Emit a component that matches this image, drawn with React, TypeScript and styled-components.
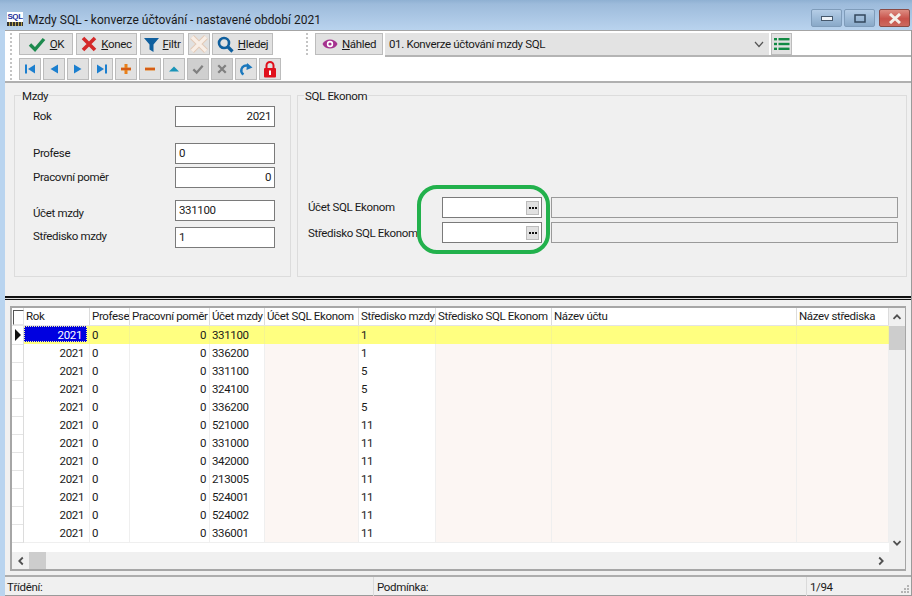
import React from 'react';
import styled, { createGlobalStyle } from 'styled-components';

const GlobalStyle = createGlobalStyle`
  html, body {
    margin: 0;
    padding: 0;
    background: #f0f0f0;
    overflow: hidden;
  }
  * {
    box-sizing: border-box;
  }
`;

const FONT = `Roboto, "Liberation Sans", Arial, sans-serif`;

const Window = styled.div`
  width: 912px;
  height: 596px;
  display: flex;
  flex-direction: column;
  background: #b9d4ef;
  font-family: ${FONT};
  font-size: 11.5px;
  letter-spacing: -0.35px;
  color: #1a1a1a;
  overflow: hidden;
`;

const TitleBar = styled.div`
  height: 30px;
  flex: none;
  display: flex;
  align-items: center;
  padding: 0 2px 0 7px;
  background: linear-gradient(#8fb0d2 0, #9dbbdb 4px, #b9d3ee 100%);
`;

const AppLogo = styled.div`
  width: 16px;
  height: 14px;
  margin: 8px 5px 0 0;
  background: #fff;
  display: flex;
  flex-direction: column;
  align-items: center;
  font: bold 8px/9px "Liberation Sans", Arial, sans-serif;
  letter-spacing: -0.4px;
  color: #1b2f9c;
  overflow: hidden;
`;

const LogoFoot = styled.span`
  width: 100%;
  height: 4px;
  margin-top: 1px;
  background: repeating-linear-gradient(90deg, #333 0 2px, #b8a24c 2px 3px);
`;

const TitleText = styled.div`
  flex: 1;
  padding-top: 9px;
  font-size: 12px;
  letter-spacing: 0;
`;

const CaptionButton = styled.div<{ $close?: boolean; $gap: number }>`
  width: 31px;
  height: 18px;
  margin: 6px 0 0 ${p => p.$gap}px;
  border-radius: 2px;
  border: 1px solid ${p => (p.$close ? '#8a4a44' : '#7f9cba')};
  background: ${p => (p.$close
    ? 'linear-gradient(#dd8d82, #c8524a 55%, #cc6a60)'
    : 'linear-gradient(#b5cde6, #9ebbd8 50%, #8aa9c8)')};
  display: flex;
  align-items: center;
  justify-content: center;
`;

const Content = styled.div`
  flex: 1;
  min-height: 0;
  margin-left: 5px;
  display: flex;
  flex-direction: column;
  background: #f0f0f0;
  border-right: 1px solid #9a9a9a;
`;

const Toolbars = styled.div`
  height: 53px;
  flex: none;
  background: #fff;
  border-top: 1px solid #a4a4a4;
  border-bottom: 2px solid #b0b0b0;
`;

const ToolRow = styled.div`
  height: 26px;
  display: flex;
  padding: 2px 0 0 14px;
`;

const ToolRowLow = styled(ToolRow)`
  height: 24px;
  padding-top: 1px;
`;

const Grip = styled.span<{ $after?: number; $before?: number }>`
  width: 2px;
  height: 22px;
  margin: 0 ${p => p.$after ?? 0}px 0 ${p => p.$before ?? -9}px;
  border-left: 2px dotted #c4c4c4;
  flex: none;
`;

const ToolButton = styled.button<{ $w: number; $gap?: number }>`
  width: ${p => p.$w}px;
  height: 22px;
  margin: 0 0 0 ${p => p.$gap ?? 0}px;
  padding: 0;
  flex: none;
  display: flex;
  align-items: center;
  justify-content: center;
  gap: 4px;
  border: 1px solid #bcbcbc;
  background: #e1e1e1;
  font: 11.5px ${FONT};
  letter-spacing: -0.35px;
  color: #1a1a1a;
`;

const MiniButton = styled(ToolButton)<{ $dim?: boolean }>`
  width: 22px;
  margin-left: 2px;
  background: ${p => (p.$dim ? '#cfcfcf' : '#e1e1e1')};
  &:first-of-type {
    margin-left: 0;
  }
`;

const ComboGroup = styled.div`
  flex: 1;
  height: 24px;
  margin-left: 2px;
  display: flex;
  border-bottom: 2px solid #b4b4b4;
`;

const Combo = styled.div`
  width: 384px;
  height: 22px;
  display: flex;
  align-items: center;
  justify-content: space-between;
  padding: 0 5px 0 4px;
  background: #e3e3e3;
`;

const FormArea = styled.div`
  height: 213px;
  flex: none;
  display: grid;
  grid-template-columns: 277px 610px;
  column-gap: 6px;
  padding: 4px 0 0 9px;
`;

const Group = styled.fieldset`
  position: relative;
  margin: 0;
  height: 190px;
  padding: 0;
  border: 1px solid #dcdcdc;
  min-width: 0;
`;

const GroupTitle = styled.legend`
  margin-left: 6px;
  padding: 2px 1px 0;
  line-height: 14px;
`;

const FieldColumn = styled.div<{ $top: number; $left: number }>`
  display: flex;
  flex-direction: column;
  padding: ${p => p.$top}px 0 0 ${p => p.$left}px;
`;

const FieldRow = styled.div<{ $gap?: number; $label?: number }>`
  display: grid;
  grid-template-columns: ${p => p.$label ?? 142}px auto 1fr;
  margin-top: ${p => p.$gap ?? 0}px;
  height: 21px;
`;

const FieldLabel = styled.label<{ $dy?: number }>`
  line-height: 21px;
  margin-top: ${p => p.$dy ?? 0}px;
  white-space: nowrap;
`;

const Input = styled.div<{ $right?: boolean }>`
  width: 100px;
  height: 21px;
  border: 1px solid #7a7a7a;
  background: #fff;
  line-height: 19px;
  padding: 0 3px;
  text-align: ${p => (p.$right ? 'right' : 'left')};
`;

const PickInput = styled(Input)`
  display: flex;
  justify-content: flex-end;
  align-items: center;
  padding: 0 2px 0 0;
`;

const PickButton = styled.span`
  width: 13px;
  height: 14px;
  background: #e1e1e1;
  border: 1px solid #bcbcbc;
  display: flex;
  align-items: center;
  justify-content: center;
  gap: 1px;
`;

const Dot = styled.i`
  width: 2px;
  height: 2px;
  background: #111;
`;

const ReadOnly = styled.div`
  width: 347px;
  height: 21px;
  margin-left: 9px;
  border: 1px solid #9a9a9a;
  background: #f0f0f0;
`;

const Highlight = styled.div`
  position: absolute;
  left: 119px;
  top: 82px;
  width: 133px;
  height: 69px;
  border: 4px solid #22b14c;
  border-radius: 20px;
  pointer-events: none;
`;

const Splitter = styled.div`
  height: 4px;
  flex: none;
  border-top: 2px solid #111;
  border-bottom: 1px solid #111;
  background: #dcdcdc;
`;

const GridArea = styled.div`
  flex: 1;
  min-height: 0;
  padding: 6px 5px 4px 5px;
  display: flex;
`;

const GridFrame = styled.div`
  width: 896px;
  height: 265px;
  border: 2px solid #a6a6a6;
  border-right-width: 1px;
  display: grid;
  grid-template-columns: 877px 16px;
  grid-template-rows: 244px 17px;
  background: #fff;
`;

const GridBody = styled.div`
  grid-column: 1;
  grid-row: 1;
  overflow: hidden;
`;

const COLUMNS = '12px 66px 40px 80px 55px 94px 77px 116px 245px 92px';

const HeaderRow = styled.div`
  display: grid;
  grid-template-columns: ${COLUMNS};
  height: 18px;
  border-bottom: 1px solid #e4e4e4;
`;

const HeaderCell = styled.div`
  padding-left: 2px;
  line-height: 17px;
  border-right: 1px solid #dcdcdc;
  white-space: nowrap;
  overflow: hidden;
`;

const CornerBox = styled.div`
  position: relative;
  border-right: 1px solid #dcdcdc;
  &::before {
    content: '';
    position: absolute;
    left: 1px;
    top: 2px;
    width: 9px;
    height: 13px;
    border: 1px solid #e4e4e4;
    border-top-color: #555;
    border-left-color: #555;
  }
`;

const DataRow = styled.div`
  display: grid;
  grid-template-columns: ${COLUMNS};
  height: 18px;
`;

const Cell = styled.div<{
  $right?: number;
  $tint?: boolean;
  $active?: boolean;
}>`
  padding: 0 ${p => p.$right ?? 0}px 0 ${p => (p.$right ? 0 : 2)}px;
  text-align: ${p => (p.$right ? 'right' : 'left')};
  line-height: 18px;
  border-right: 1px solid ${p => (p.$active ? '#f5f590' : '#efefef')};
  border-bottom: 1px solid ${p => (p.$active ? '#f5f590' : '#efefef')};
  background: ${p => (p.$active ? '#ffff80' : p.$tint ? '#fcf6f3' : '#fff')};
`;

const SelectedCell = styled.div`
  margin: 0 1px 1px 0;
  padding-right: 4px;
  text-align: right;
  line-height: 16px;
  height: 16px;
  color: #fff;
  background: #0000e0;
  border: 1px dotted #f4f4a0;
`;

const Indicator = styled.div`
  border-right: 1px solid #dcdcdc;
  border-bottom: 1px solid #e4e4e4;
  display: flex;
  align-items: center;
  padding-left: 3px;
  &::before {
    content: '';
    width: 0;
    height: 0;
    border-left: 6px solid #111;
    border-top: 6px solid transparent;
    border-bottom: 6px solid transparent;
  }
`;

const EmptyIndicator = styled(Indicator)`
  &::before {
    display: none;
  }
`;

const VScroll = styled.div`
  grid-column: 2;
  grid-row: 1 / span 2;
  background: #f0f0f0;
  display: flex;
  flex-direction: column;
  align-items: center;
`;

const VThumb = styled.div`
  width: 100%;
  height: 24px;
  background: #cdcdcd;
`;

const ScrollArrowBox = styled.div<{ $h: number; $w?: number }>`
  height: ${p => p.$h}px;
  width: ${p => (p.$w ? `${p.$w}px` : '100%')};
  flex: none;
  display: flex;
  align-items: center;
  justify-content: center;
`;

const ScrollTrack = styled.div`
  flex: 1;
`;

const HScroll = styled.div`
  grid-column: 1;
  grid-row: 2;
  background: #f0f0f0;
  display: flex;
  align-items: center;
`;

const HThumb = styled.div`
  width: 17px;
  height: 100%;
  background: #cdcdcd;
`;

const StatusBar = styled.div`
  height: 21px;
  flex: none;
  display: grid;
  grid-template-columns: 368px 433px 1fr;
  border-top: 2px solid #adadad;
  border-bottom: 1px solid #9a9a9a;
  position: relative;
`;

const StatusCell = styled.div`
  padding-left: 3px;
  line-height: 21px;
  border-left: 1px solid #dadada;
  &:first-child {
    border-left: 0;
    padding-left: 2px;
  }
`;

const ResizeGrip = styled.svg`
  position: absolute;
  right: 1px;
  bottom: 0;
`;

const Check = ({ color = '#1d8a4e', size = 18 }: { color?: string; size?: number }) => (
  <svg width={size} height={size} viewBox="0 0 18 18">
    <path d="M2 9.5 L7 14.5 L16 4" fill="none" stroke={color} strokeWidth="3.4" />
  </svg>
);

const Cross = ({ color = '#d42a2a', size = 16 }: { color?: string; size?: number }) => (
  <svg width={size} height={size} viewBox="0 0 16 16">
    <path d="M2 2 L14 14 M14 2 L2 14" fill="none" stroke={color} strokeWidth="3.6" />
  </svg>
);

const FadedCross = () => (
  <svg width="18" height="18" viewBox="0 0 18 18">
    <path d="M2 2 L16 16 M16 2 L2 16" fill="none" stroke="#e2c9b6" strokeWidth="5.4" />
    <path d="M2 2 L16 16 M16 2 L2 16" fill="none" stroke="#f8eee6" strokeWidth="3.4" />
  </svg>
);

const Funnel = () => (
  <svg width="15" height="15" viewBox="0 0 15 15">
    <path d="M0 1 H15 L9.5 7.5 V15 L5.5 12.5 V7.5 Z" fill="#0f5f9e" />
  </svg>
);

const Lens = () => (
  <svg width="17" height="17" viewBox="0 0 17 17">
    <circle cx="7" cy="7" r="5" fill="none" stroke="#0f5f9e" strokeWidth="2.6" />
    <path d="M10.5 10.5 L15.5 15.5" stroke="#0f5f9e" strokeWidth="3.2" />
  </svg>
);

const Eye = () => (
  <svg width="16" height="14" viewBox="0 0 16 14">
    <path d="M0.5 7 C3 1 13 1 15.5 7 C13 13 3 13 0.5 7 Z" fill="#a5328f" />
    <circle cx="8" cy="7" r="3.2" fill="#fff" />
    <circle cx="8" cy="7" r="1.6" fill="#a5328f" />
  </svg>
);

const ListIcon = () => (
  <svg width="16" height="14" viewBox="0 0 16 14">
    <g fill="#118a43">
      <rect x="0" y="1" width="3" height="2.4" />
      <rect x="4.5" y="1" width="11" height="2.4" />
      <rect x="0" y="5.8" width="3" height="2.4" />
      <rect x="4.5" y="5.8" width="11" height="2.4" />
      <rect x="0" y="10.6" width="3" height="2.4" />
      <rect x="4.5" y="10.6" width="11" height="2.4" />
    </g>
  </svg>
);

const Nav = ({ d, extra }: { d: string; extra?: string }) => (
  <svg width="12" height="12" viewBox="0 0 12 12">
    <path d={d} fill="#1b7fcf" />
    {extra && <path d={extra} fill="#1b7fcf" />}
  </svg>
);

const PlusIcon = () => (
  <svg width="12" height="12" viewBox="0 0 12 12">
    <path d="M4.5 1 H7.5 V4.5 H11 V7.5 H7.5 V11 H4.5 V7.5 H1 V4.5 H4.5 Z" fill="#e8801c" />
    <path d="M1 6 H11" stroke="#c23a16" strokeWidth="1" />
  </svg>
);

const MinusIcon = () => (
  <svg width="12" height="12" viewBox="0 0 12 12">
    <rect x="1" y="4.5" width="10" height="3" fill="#e8801c" />
    <path d="M1 6 H11" stroke="#c23a16" strokeWidth="1" />
  </svg>
);

const EditIcon = () => (
  <svg width="12" height="12" viewBox="0 0 12 12">
    <path d="M1 8.5 L6 3.5 L11 8.5 Z" fill="#1a94b8" />
  </svg>
);

const RedoIcon = () => (
  <svg width="14" height="14" viewBox="0 0 14 14">
    <path d="M4.5 12.5 A5 5 0 0 1 2.5 7 A5 5 0 0 1 9.5 4" fill="none" stroke="#1b78bd" strokeWidth="2.4" />
    <path d="M8 1 L13.5 5.5 L7.5 8 Z" fill="#1b78bd" />
  </svg>
);

const LockIcon = () => (
  <svg width="14" height="17" viewBox="0 0 14 17">
    <path d="M3.5 7.5 V4.5 A3.5 3.5 0 0 1 10.5 4.5 V7.5" fill="none" stroke="#e0101c" strokeWidth="2" />
    <rect x="1" y="7" width="12" height="9.5" rx="1" fill="#e0101c" />
    <rect x="6" y="9.5" width="2" height="4.5" fill="#fff" />
  </svg>
);

const Chevron = ({ rotate }: { rotate: number }) => (
  <svg width="10" height="10" viewBox="0 0 10 10" style={{ transform: `rotate(${rotate}deg)` }}>
    <path d="M1.5 6.8 L5 3.3 L8.5 6.8" fill="none" stroke="#505050" strokeWidth="1.8" />
  </svg>
);

const ComboChevron = () => (
  <svg width="10" height="7" viewBox="0 0 10 7">
    <path d="M1 1 L5 5.5 L9 1" fill="none" stroke="#555" strokeWidth="1.2" />
  </svg>
);

const navButtons = [
  { id: 'first', icon: <Nav d="M11 1.5 V10.5 L4 6 Z" extra="M1 1.5 H3 V10.5 H1 Z" /> },
  { id: 'prev', icon: <Nav d="M10 1.5 V10.5 L2.5 6 Z" /> },
  { id: 'next', icon: <Nav d="M2 1.5 V10.5 L9.5 6 Z" /> },
  { id: 'last', icon: <Nav d="M1 1.5 V10.5 L8 6 Z" extra="M9 1.5 H11 V10.5 H9 Z" /> },
  { id: 'plus', icon: <PlusIcon /> },
  { id: 'minus', icon: <MinusIcon /> },
  { id: 'edit', icon: <EditIcon /> },
  { id: 'post', icon: <Check color="#808080" size={12} />, dim: true },
  { id: 'cancel', icon: <Cross color="#808080" size={10} />, dim: true },
  { id: 'redo', icon: <RedoIcon /> },
  { id: 'lock', icon: <LockIcon /> },
];

const rows: [string, string][] = [
  ['331100', '1'],
  ['336200', '1'],
  ['331100', '5'],
  ['324100', '5'],
  ['336200', '5'],
  ['521000', '11'],
  ['331000', '11'],
  ['342000', '11'],
  ['213005', '11'],
  ['524001', '11'],
  ['524002', '11'],
  ['336001', '11'],
];

const headers = [
  'Rok',
  'Profese',
  'Pracovní poměr',
  'Účet mzdy',
  'Účet SQL Ekonom',
  'Středisko mzdy',
  'Středisko SQL Ekonom',
  'Název účtu',
  'Název střediska',
];

const App: React.FC = () => {
  return (
    <Window>
      <GlobalStyle />
      <TitleBar>
        <AppLogo>
          SQL
          <LogoFoot />
        </AppLogo>
        <TitleText>Mzdy SQL - konverze účtování - nastavené období 2021</TitleText>
        <CaptionButton $gap={0}>
          <svg width="12" height="5">
            <rect x="0.5" y="0.5" width="11" height="4" fill="#eef3f8" stroke="#46586c" />
          </svg>
        </CaptionButton>
        <CaptionButton $gap={2}>
          <svg width="12" height="9">
            <rect x="1" y="1" width="10" height="7" fill="none" stroke="#33475c" strokeWidth="1.5" />
          </svg>
        </CaptionButton>
        <CaptionButton $gap={4} $close>
          <svg width="14" height="11">
            <path d="M2 1 L12 10 M12 1 L2 10" stroke="#f4efe9" strokeWidth="3" />
          </svg>
        </CaptionButton>
      </TitleBar>

      <Content>
        <Toolbars>
          <ToolRow>
            <Grip $after={7} />
            <ToolButton $w={54}>
              <Check />
              <span>
                <u>O</u>K
              </span>
            </ToolButton>
            <ToolButton $w={61} $gap={3}>
              <Cross />
              <span>
                <u>K</u>onec
              </span>
            </ToolButton>
            <ToolButton $w={44} $gap={3}>
              <Funnel />
              <span>
                <u>F</u>iltr
              </span>
            </ToolButton>
            <ToolButton $w={22} $gap={4}>
              <FadedCross />
            </ToolButton>
            <ToolButton $w={61} $gap={2}>
              <Lens />
              <span>
                <u>H</u>ledej
              </span>
            </ToolButton>
            <Grip $before={33} />
            <ToolButton $w={68} $gap={7}>
              <Eye />
              <span>
                <u>N</u>áhled
              </span>
            </ToolButton>
            <ComboGroup>
              <Combo>
                <span>01. Konverze účtování mzdy SQL</span>
                <ComboChevron />
              </Combo>
              <ToolButton $w={21} $gap={2}>
                <ListIcon />
              </ToolButton>
            </ComboGroup>
          </ToolRow>
          <ToolRowLow>
            <Grip $after={7} />
            {navButtons.map(b => (
              <MiniButton key={b.id} $w={22} $dim={b.dim}>
                {b.icon}
              </MiniButton>
            ))}
          </ToolRowLow>
        </Toolbars>

        <FormArea>
          <Group>
            <GroupTitle>Mzdy</GroupTitle>
            <FieldColumn $top={3} $left={18}>
              <FieldRow>
                <FieldLabel>Rok</FieldLabel>
                <Input $right>2021</Input>
              </FieldRow>
              <FieldRow $gap={16}>
                <FieldLabel>Profese</FieldLabel>
                <Input>0</Input>
              </FieldRow>
              <FieldRow $gap={3}>
                <FieldLabel>Pracovní poměr</FieldLabel>
                <Input $right>0</Input>
              </FieldRow>
              <FieldRow $gap={12}>
                <FieldLabel $dy={3}>Účet mzdy</FieldLabel>
                <Input>331100</Input>
              </FieldRow>
              <FieldRow $gap={6}>
                <FieldLabel $dy={-1}>Středisko mzdy</FieldLabel>
                <Input>1</Input>
              </FieldRow>
            </FieldColumn>
          </Group>
          <Group>
            <GroupTitle>SQL Ekonom</GroupTitle>
            <FieldColumn $top={94} $left={10}>
              <FieldRow $label={134}>
                <FieldLabel>Účet SQL Ekonom</FieldLabel>
                <PickInput>
                  <PickButton>
                    <Dot />
                    <Dot />
                    <Dot />
                  </PickButton>
                </PickInput>
                <ReadOnly />
              </FieldRow>
              <FieldRow $label={134} $gap={4}>
                <FieldLabel $dy={1}>Středisko SQL Ekonom</FieldLabel>
                <PickInput>
                  <PickButton>
                    <Dot />
                    <Dot />
                    <Dot />
                  </PickButton>
                </PickInput>
                <ReadOnly />
              </FieldRow>
            </FieldColumn>
            <Highlight />
          </Group>
        </FormArea>

        <Splitter />

        <GridArea>
          <GridFrame>
            <GridBody>
              <HeaderRow>
                <CornerBox />
                {headers.map(h => (
                  <HeaderCell key={h}>{h}</HeaderCell>
                ))}
              </HeaderRow>
              {rows.map(([account, centre], i) => {
                const active = i === 0;
                return (
                  <DataRow key={i}>
                    {active ? <Indicator /> : <EmptyIndicator />}
                    {active ? (
                      <Cell $active $right={1}>
                        <SelectedCell>2021</SelectedCell>
                      </Cell>
                    ) : (
                      <Cell $right={5}>2021</Cell>
                    )}
                    <Cell $active={active}>0</Cell>
                    <Cell $active={active} $right={3}>
                      0
                    </Cell>
                    <Cell $active={active}>{account}</Cell>
                    <Cell $active={active} $tint />
                    <Cell $active={active}>{centre}</Cell>
                    <Cell $active={active} $tint />
                    <Cell $active={active} $tint />
                    <Cell $active={active} $tint />
                  </DataRow>
                );
              })}
            </GridBody>
            <VScroll>
              <ScrollArrowBox $h={18}>
                <Chevron rotate={0} />
              </ScrollArrowBox>
              <VThumb />
              <ScrollTrack />
              <ScrollArrowBox $h={18}>
                <Chevron rotate={180} />
              </ScrollArrowBox>
              <ScrollArrowBox $h={17} />
            </VScroll>
            <HScroll>
              <ScrollArrowBox $h={17} $w={17}>
                <Chevron rotate={-90} />
              </ScrollArrowBox>
              <HThumb />
              <ScrollTrack />
              <ScrollArrowBox $h={17} $w={17}>
                <Chevron rotate={90} />
              </ScrollArrowBox>
            </HScroll>
          </GridFrame>
        </GridArea>

        <StatusBar>
          <StatusCell>Třídění:</StatusCell>
          <StatusCell>Podmínka:</StatusCell>
          <StatusCell>1/94</StatusCell>
          <ResizeGrip width="12" height="12" viewBox="0 0 12 12">
            <g fill="#b4b4b4">
              <rect x="9" y="2" width="2" height="2" />
              <rect x="6" y="5" width="2" height="2" />
              <rect x="9" y="5" width="2" height="2" />
              <rect x="3" y="8" width="2" height="2" />
              <rect x="6" y="8" width="2" height="2" />
              <rect x="9" y="8" width="2" height="2" />
            </g>
          </ResizeGrip>
        </StatusBar>
      </Content>
    </Window>
  );
};

export default App;
